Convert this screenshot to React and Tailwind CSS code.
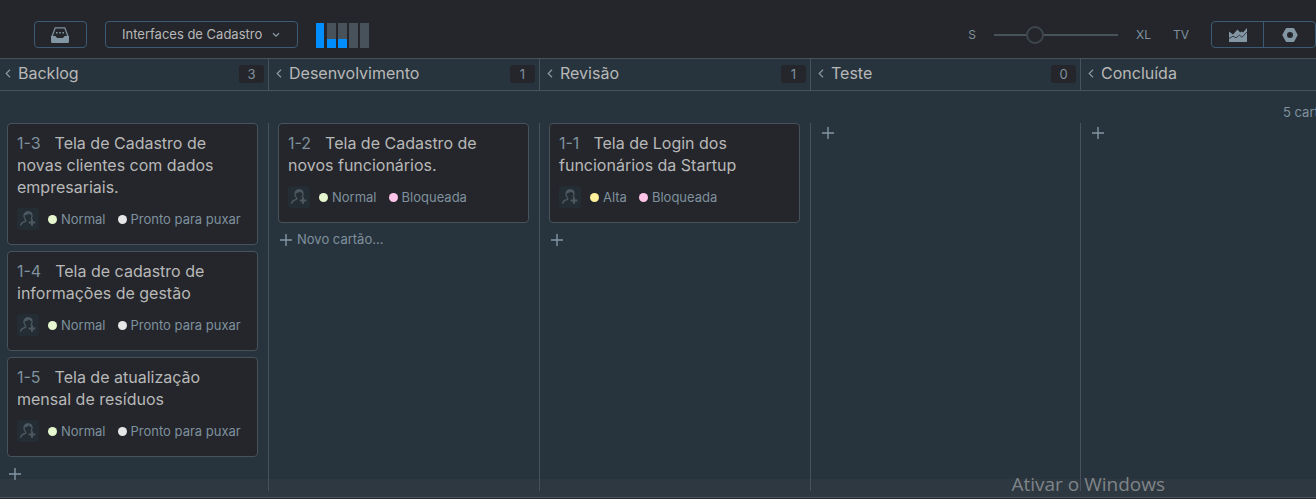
import React from "react";

const LEVELS = {
  Normal: "bg-[#e6f6cf]",
  Alta: "bg-[#fff09c]",
  Bloqueada: "bg-[#ffc4e8]",
  "Pronto para puxar": "bg-[#e6e6e6]",
};

const COLUMNS = [
  {
    name: "Backlog",
    count: 3,
    cards: [
      { id: "1-3", title: "Tela de Cadastro de novas clientes com dados empresariais.", tags: ["Normal", "Pronto para puxar"] },
      { id: "1-4", title: "Tela de cadastro de informações de gestão", tags: ["Normal", "Pronto para puxar"] },
      { id: "1-5", title: "Tela de atualização mensal de resíduos", tags: ["Normal", "Pronto para puxar"] },
    ],
  },
  {
    name: "Desenvolvimento",
    count: 1,
    addLabel: "Novo cartão...",
    cards: [{ id: "1-2", title: "Tela de Cadastro de novos funcionários.", tags: ["Normal", "Bloqueada"] }],
  },
  {
    name: "Revisão",
    count: 1,
    cards: [{ id: "1-1", title: "Tela de Login dos funcionários da Startup", tags: ["Alta", "Bloqueada"] }],
  },
  { name: "Teste", count: 0, cards: [] },
  { name: "Concluída", cards: [] },
];

const GRID = "grid grid-cols-[269fr_271fr_271fr_270fr_235fr]";

function InboxIcon() {
  return (
    <svg width="19" height="16" viewBox="0 0 19 16" fill="none" aria-hidden="true">
      <path d="M1 9.500 4.200.8h9.600L17 9.500" stroke="#7f919e" strokeWidth="1.300" />
      <path d="M0 9h4.500l1.500 2h6l1.500-2H18v5.500a1.500 1.500 0 0 1-1.500 1.500h-15A1.500 1.500 0 0 1 0 14.500z" fill="#8396a3" />
      <path d="M5 5h1.600v1.600H5zM8.200 5h1.600v1.600H8.200zM11.400 5H13v1.600h-1.600z" fill="#8396a3" />
    </svg>
  );
}

function ChartIcon() {
  return (
    <svg width="18" height="14" viewBox="0 0 18 14" aria-hidden="true">
      <path d="M0 3.500 4 6.500 8.500 1.500 11.200 4.500 12.800 3.500 14 4.500 18 0V14H0z" fill="#8396a3" />
      <path d="M0 10.500 4 8.200 7 9.800 10.500 7 13 9.300 18 4" fill="none" stroke="#24262b" strokeWidth=".8" />
    </svg>
  );
}

function NutIcon() {
  return (
    <svg width="16" height="14" viewBox="0 0 16 14" aria-hidden="true">
      <path fillRule="evenodd" d="M4.600 0h6.800a1 1 0 0 1 .8.500l3.200 5.800a1.400 1.400 0 0 1 0 1.400l-3.200 5.800a1 1 0 0 1-.8.500H4.600a1 1 0 0 1-.8-.5L.6 7.700a1.400 1.400 0 0 1 0-1.400L3.800.5a1 1 0 0 1 .8-.5zM8 4a3 3 0 1 0 0 6 3 3 0 0 0 0-6z" fill="#8396a3" />
    </svg>
  );
}

function AddUserIcon() {
  return (
    <svg width="16" height="16" viewBox="0 0 16 16" fill="none" aria-hidden="true">
      <path d="M.7 14.800c0-2.800 1.800-3.600 4.600-4.300.6-.2.700-1.100.2-1.700C4.600 7.900 4 6.300 4 4.700 4 2.300 5.600.9 8 .9s4 1.400 4 3.800c0 1.300-.4 2.500-1.100 3.500" stroke="#4c5962" strokeWidth="1.300" />
      <path d="M4.200 4.600C4.200 2 5.700.5 8 .5s4 1.500 3.900 4.100C10.500 4.200 9.500 3.200 9 2.600 8 3.600 6 4.300 4.200 4.600z" fill="#4c5962" />
      <path d="M12 8.200v6.600M8.700 11.500h6.600" stroke="#4c5962" strokeWidth="2" />
    </svg>
  );
}

function MiniBoard() {
  const bars = [
    [8, 25],
    [9, 9],
    [9, 9],
    [9, 0],
    [9, 0],
  ];
  let x = 0;
  return (
    <svg className="ml-[18px] mt-px shrink-0" width="53" height="25" viewBox="0 0 53 25" aria-hidden="true">
      {bars.map(([w, fill], i) => {
        const left = x;
        x += w + (i === 0 ? 3 : 2);
        return (
          <g key={i}>
            <rect x={left} y="0" width={w} height="25" fill="#47525b" />
            <rect x={left} y={25 - fill} width={w} height={fill} fill="#008eff" />
          </g>
        );
      })}
    </svg>
  );
}

function Toolbar() {
  return (
    <header className="flex items-center border-b border-[#47525b] bg-[#24262b] pb-2.5 pt-[21px] pl-[34px] text-[13px] text-[#7f919e]">
      <button aria-label="Caixa de entrada" className="flex h-[27px] w-[53px] shrink-0 items-center justify-center rounded border border-[#3b5a74]">
        <InboxIcon />
      </button>
      <div className="ml-[18px] grid shrink-0 items-center">
        <select aria-label="Quadro" className="col-start-1 row-start-1 h-[27px] w-[193px] appearance-none rounded border border-[#3b5a74] bg-transparent pl-4 text-[13px] text-[#b8b8b8]">
          <option>Interfaces de Cadastro</option>
        </select>
        <svg className="pointer-events-none col-start-1 row-start-1 mr-[18px] justify-self-end" width="8" height="6" viewBox="0 0 8 6" fill="none" aria-hidden="true">
          <path d="m1 1.200 3 3 3-3" stroke="#8a98a2" strokeWidth="1.300" />
        </svg>
      </div>
      <MiniBoard />
      <div className="ml-auto flex items-center text-xs">
        <span>S</span>
        <input
          type="range"
          aria-label="Tamanho dos cartões"
          min="0"
          max="100"
          defaultValue="30"
          className="mx-[18px] h-[18px] w-[124px] appearance-none bg-transparent [&::-webkit-slider-runnable-track]:h-0.5 [&::-webkit-slider-runnable-track]:bg-[#47525b] [&::-webkit-slider-thumb]:-mt-2 [&::-webkit-slider-thumb]:size-[18px] [&::-webkit-slider-thumb]:appearance-none [&::-webkit-slider-thumb]:rounded-full [&::-webkit-slider-thumb]:border-2 [&::-webkit-slider-thumb]:border-[#3d474c] [&::-webkit-slider-thumb]:bg-[#24262b]"
        />
        <span>XL</span>
        <button className="ml-[22px]">TV</button>
      </div>
      <div className="ml-[22px] flex h-[27px] shrink-0 rounded border border-[#3b5a74]">
        <button aria-label="Relatórios" className="flex w-[52px] items-center justify-center border-r border-[#3b5a74]">
          <ChartIcon />
        </button>
        <button aria-label="Configurações" className="flex w-[51px] items-center justify-center">
          <NutIcon />
        </button>
      </div>
    </header>
  );
}

function ColumnHeader({ column, first, last }) {
  return (
    <div className={`flex h-[31px] items-center pr-1 pb-0.5 ${first ? "pl-[5px]" : "pl-[7px]"} ${last ? "" : "border-r border-[#47525b]"}`}>
      <button aria-label={`Recolher ${column.name}`} className="mr-[7px]">
        <svg width="6" height="9" viewBox="0 0 6 9" fill="none" aria-hidden="true">
          <path d="M5 .8 1.200 4.500 5 8.200" stroke="#8a98a2" strokeWidth="1.200" />
        </svg>
      </button>
      <h2 className="pb-0.5 text-base leading-[22px] text-[#b8b8b8]">{column.name}</h2>
      {column.count !== undefined && (
        <span className="ml-auto h-[18px] w-[25px] rounded-[3px] bg-[#24262b] text-center text-[13px] leading-[18px] text-[#7f919e]">{column.count}</span>
      )}
    </div>
  );
}

function Card({ card }) {
  return (
    <article className="rounded border border-[#47525b] bg-[#24262b] pb-3.5 pl-[9px] pr-2 pt-2">
      <h3 className="pr-6 text-base leading-[22px] text-[#b8b8b8]">
        <a href={`#${card.id}`} className="mr-3.5 inline-block text-[#7f919e]">{card.id}</a>
        {card.title}
      </h3>
      <div className="mt-2.5 flex items-center text-[13px] leading-[22px] text-[#7f919e]">
        <button aria-label="Atribuir responsável" className="mr-[9px] flex size-[22px] shrink-0 items-center justify-center rounded-[3px] bg-[#252d34]">
          <AddUserIcon />
        </button>
        <ul className="flex gap-3">
          {card.tags.map((tag) => (
            <li key={tag} className="flex items-center gap-1 whitespace-nowrap">
              <span className={`size-[9px] rounded-full ${LEVELS[tag]}`} />
              {tag}
            </li>
          ))}
        </ul>
      </div>
    </article>
  );
}

function Column({ column, first, last }) {
  return (
    <section className={`pr-2.5 ${first ? "pl-[7px]" : "pl-[9px]"} ${last ? "" : "border-r border-[#47525b]"}`}>
      <div className="flex flex-col gap-1.5">
        {column.cards.map((card) => (
          <Card key={card.id} card={card} />
        ))}
      </div>
      <button
        aria-label={column.addLabel ? undefined : "Novo cartão"}
        className={`flex h-5 items-center gap-[5px] pl-0.5 text-[13px] text-[#7f919e] ${column.cards.length ? "mt-[7px]" : ""}`}
      >
        <svg width="12" height="12" viewBox="0 0 12 12" aria-hidden="true">
          <path d="M6 0v12M0 6h12" stroke="#8396a3" strokeWidth="1.400" />
        </svg>
        {column.addLabel}
      </button>
    </section>
  );
}

export default function App() {
  const last = COLUMNS.length - 1;
  return (
    <div className="relative flex min-h-screen flex-col overflow-hidden bg-[#24262b] pb-px font-['Inter',sans-serif]">
      <Toolbar />
      <main className="flex grow flex-col border-b border-[#47525b] bg-[#28343d] pb-1.5">
        <div className={`${GRID} border-b border-[#47525b]`}>
          {COLUMNS.map((column, i) => (
            <ColumnHeader key={column.name} column={column} first={i === 0} last={i === last} />
          ))}
        </div>
        <div className="flex h-8 items-center justify-end pt-3 text-[13px] text-[#7f919e]">
          <p className="w-[33px] overflow-hidden whitespace-nowrap">5 cartões</p>
        </div>
        <div className={`${GRID} grow`}>
          {COLUMNS.map((column, i) => (
            <Column key={column.name} column={column} first={i === 0} last={i === last} />
          ))}
        </div>
      </main>
      <div className="pointer-events-none absolute inset-x-0 bottom-0.5 flex h-[18px] items-center justify-end bg-[#47525b]/15 pr-[151px] font-['Open_Sans',sans-serif] text-[19px] text-[#808488]">
        <p className="-mt-2">Ativar o Windows</p>
      </div>
    </div>
  );
}
